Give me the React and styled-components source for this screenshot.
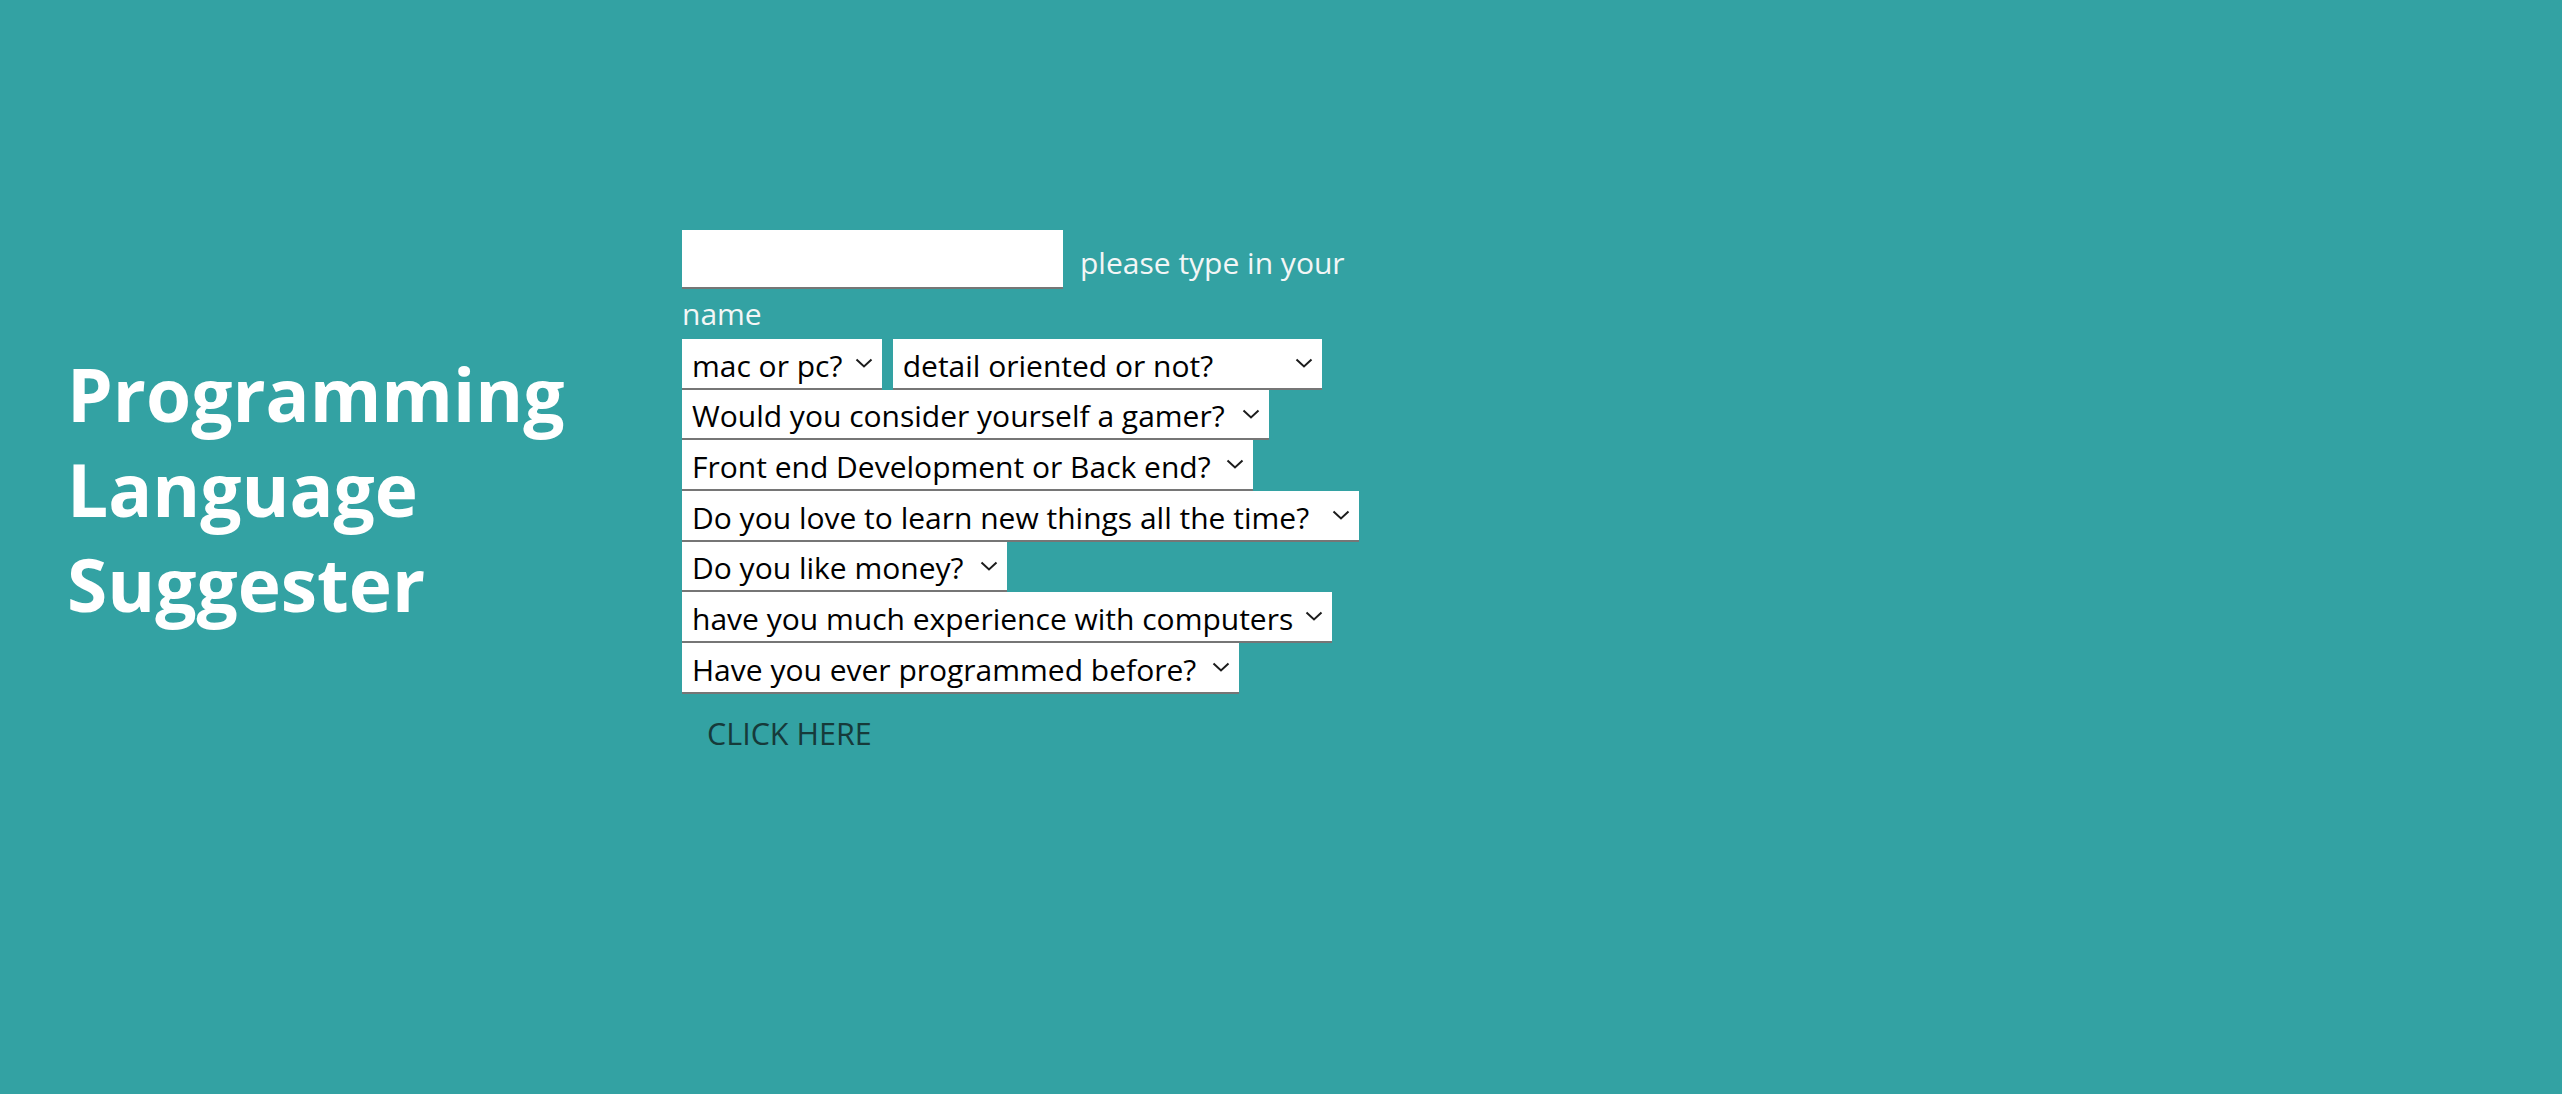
import React from "react";
import styled, { createGlobalStyle } from "styled-components";

const GlobalStyle = createGlobalStyle`
  html, body {
    margin: 0;
    padding: 0;
    background: #33a2a3;
  }
  body {
    font-family: "Open Sans", "Noto Sans", sans-serif;
  }
`;

const questions = [
  { label: "mac or pc?", width: 200 },
  { label: "detail oriented or not?", width: 429 },
  { label: "Would you consider yourself a gamer?", width: 587 },
  { label: "Front end Development or Back end?", width: 571 },
  { label: "Do you love to learn new things all the time?", width: 677 },
  { label: "Do you like money?", width: 325 },
  { label: "have you much experience with computers", width: 650 },
  { label: "Have you ever programmed before?", width: 557 },
];

const Chevron = () => (
  <ChevronIcon width="18" height="10" viewBox="0 0 18 10" fill="none">
    <path d="M1.5 1.5 L9 8.5 L16.5 1.5" stroke="#1c1c1c" strokeWidth="2" />
  </ChevronIcon>
);

const App = () => {
  return (
    <>
      <GlobalStyle />
      <Page>
        <Title>
          Programming
          <br />
          Language
          <br />
          Suggester
        </Title>

        <Form onSubmit={(e) => e.preventDefault()}>
          <NameLine>
            <NameInput type="text" />
            please type in your name
          </NameLine>

          <Questions>
            {questions.map((q) => (
              <SelectWrap key={q.label}>
                <Select width={q.width} defaultValue="">
                  <option value="">{q.label}</option>
                  <option value="yes">yes</option>
                  <option value="no">no</option>
                </Select>
                <Chevron />
              </SelectWrap>
            ))}
          </Questions>

          <Button type="submit">CLICK HERE</Button>
        </Form>
      </Page>
    </>
  );
};

export default App;

const Page = styled.div`
  display: flex;
  align-items: flex-start;
  padding: 230px 0 0 67px;
  min-height: 100vh;
  box-sizing: border-box;
`;

const Title = styled.h1`
  flex-shrink: 0;
  width: 615px;
  margin: 116px 0 0;
  font-size: 73px;
  font-weight: 700;
  line-height: 95px;
  color: #ffffff;
`;

const Form = styled.form`
  width: 718px;
  flex-shrink: 0;
`;

const NameLine = styled.div`
  font-size: 30px;
  line-height: 50px;
  color: #f3f6f6;
`;

const NameInput = styled.input`
  box-sizing: border-box;
  width: 381px;
  height: 59px;
  margin: 0 17px 0 0;
  padding: 7px 10px 0;
  border: none;
  border-bottom: 2px solid #767676;
  background: #ffffff;
  font-family: inherit;
  font-size: 30px;
  outline: none;
`;

const Questions = styled.div`
  display: flex;
  flex-wrap: wrap;
  column-gap: 10.7px;
  row-gap: 0;
`;

const SelectWrap = styled.div`
  position: relative;
  display: flex;
`;

const Select = styled.select`
  appearance: none;
  -webkit-appearance: none;
  box-sizing: border-box;
  width: ${(props) => props.width}px;
  height: 50.67px;
  margin: 0;
  padding: 4px 30px 0 10px;
  border: none;
  border-bottom: 2px solid #767676;
  border-radius: 0;
  background: #ffffff;
  color: #000000;
  font-family: "Open Sans", "Noto Sans", sans-serif;
  font-size: 30px;
  outline: none;
`;

const ChevronIcon = styled.svg`
  position: absolute;
  right: 9px;
  top: 19px;
  pointer-events: none;
`;

const Button = styled.button`
  display: block;
  margin: 8px 0 0;
  padding: 10px 25px;
  border: none;
  background: transparent;
  color: #163a3a;
  font-family: "Open Sans", "Noto Sans", sans-serif;
  font-size: 30.5px;
  cursor: pointer;
`;
